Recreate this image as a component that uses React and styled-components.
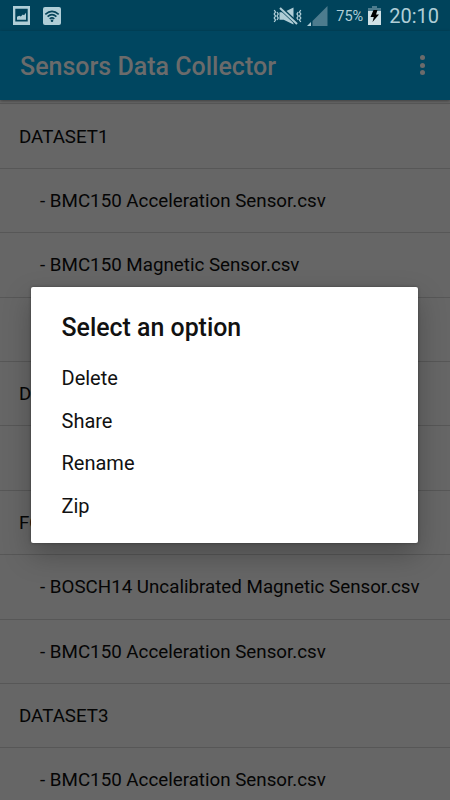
import styled, { createGlobalStyle } from "styled-components";

const rows = [
  { id: 1, text: "DATASET1" },
  { id: 2, text: "- BMC150 Acceleration Sensor.csv", child: true },
  { id: 3, text: "- BMC150 Magnetic Sensor.csv", child: true },
  { id: 4, text: "", child: true },
  { id: 5, text: "DA" },
  { id: 6, text: "", child: true },
  { id: 7, text: "FO" },
  { id: 8, text: "- BOSCH14 Uncalibrated Magnetic Sensor.csv", child: true },
  { id: 9, text: "- BMC150 Acceleration Sensor.csv", child: true },
  { id: 10, text: "DATASET3" },
  { id: 11, text: "- BMC150 Acceleration Sensor.csv", child: true },
];

const options = ["Delete", "Share", "Rename", "Zip"];

const PictureIcon = () => (
  <svg width="17" height="19" viewBox="0 0 17 19">
    <path fill="#b0ced7" fillRule="evenodd" d="M0 0h17v19H0zM2.3 2.8v12.8h12.4V2.8z" />
    <path fill="#b0ced7" d="M4 13.7v-3l2.3-1 1.5.8 2-2 1.2.7 2-2.5v7z" />
  </svg>
);

const WifiIcon = () => (
  <svg width="18" height="18" viewBox="0 0 18 18">
    <rect width="18" height="18" rx="2" fill="#b0ced7" />
    <g fill="none" stroke="#06445a" strokeWidth="1.6">
      <path d="M2.3 7.3Q9 1.3 15.7 7.3" />
      <path d="M4.6 9.7Q9 5.6 13.4 9.7" />
      <path d="M6.7 11.9Q9 9.8 11.3 11.9" />
    </g>
    <circle cx="9" cy="13.8" r="1.3" fill="#06445a" />
  </svg>
);

const MuteIcon = () => (
  <svg width="30" height="18" viewBox="0 0 30 18">
    <g fill="none" stroke="#b0ced7" strokeWidth="1.3">
      <path d="M2.2 3l1.3 2-1.3 2 1.3 2-1.3 2 1.3 2-1.3 2" />
      <path d="M5 5l1.2 2L5 9l1.2 2L5 13" />
      <path d="M28.8 3l-1.3 2 1.3 2-1.3 2 1.3 2-1.3 2 1.3 2" />
      <path d="M26.2 5L25 7l1.2 2-1.2 2 1.2 2" />
    </g>
    <path fill="#b0ced7" d="M7.5 5.2h4.2L21.5.4v17.2l-9.8-4.8H7.5z" />
    <path stroke="#06445a" strokeWidth="4" d="M7.5 0l18 17" />
    <path stroke="#b0ced7" strokeWidth="2" d="M8 1l17 16" />
  </svg>
);

const SignalIcon = () => (
  <svg width="21" height="20" viewBox="0 0 21 20">
    <path fill="#4d7c8e" d="M20.5 0v20H5.5v-5z" />
    <path fill="#b0ced7" d="M4 16v4H0z" />
  </svg>
);

const BatteryIcon = () => (
  <svg width="13" height="19" viewBox="0 0 13 19">
    <path fill="#4d7c8e" d="M4 0h5v2h4v4H0V2h4z" />
    <path fill="#d0e1e6" d="M0 5h13v14H0z" />
    <path fill="#000" d="M5.5 4h4L8 8.5h3L4.5 16l1.3-5H2.5z" />
  </svg>
);

const App = () => {
  return (
    <Screen>
      <GlobalStyle />
      <StatusBar>
        <StatusGroup $gap="13px">
          <PictureIcon />
          <WifiIcon />
        </StatusGroup>
        <StatusGroup $gap="5px">
          <MuteIcon />
          <SignalIcon />
          <Percent>75%</Percent>
          <BatteryIcon />
          <Clock>20:10</Clock>
        </StatusGroup>
      </StatusBar>
      <Toolbar>
        <Title>Sensors Data Collector</Title>
        <MenuButton aria-label="More options">
          <Dot />
          <Dot />
          <Dot />
        </MenuButton>
      </Toolbar>
      <List>
        {rows.map(row => (
          <Row key={row.id} $child={row.child}>
            {row.text}
          </Row>
        ))}
      </List>
      <Overlay>
        <Dialog role="dialog">
          <DialogTitle>Select an option</DialogTitle>
          {options.map(option => (
            <Option key={option}>{option}</Option>
          ))}
        </Dialog>
      </Overlay>
    </Screen>
  );
};

export default App;

/* ---------------------------- Styled Components --------------------------- */

const GlobalStyle = createGlobalStyle`
  * {
    box-sizing: border-box;
  }

  body {
    margin: 0;
    font-family: Roboto, sans-serif;
  }
`;

const Screen = styled.div`
  position: relative;
  display: flex;
  flex-direction: column;
  width: 450px;
  height: 800px;
  overflow: hidden;
  background: #666;
`;

const StatusBar = styled.div`
  flex: none;
  display: flex;
  justify-content: space-between;
  height: 31px;
  padding: 0 11px 0 13px;
  background: #00435b;
  color: #b0ced7;
`;

const StatusGroup = styled.div`
  display: flex;
  align-items: center;
  gap: ${props => props.$gap};
`;

const Percent = styled.span`
  margin-left: 3px;
  padding-top: 2px;
  font-size: 14.5px;
`;

const Clock = styled.span`
  margin-left: 3px;
  padding-top: 1px;
  font-size: 20px;
`;

const Toolbar = styled.header`
  flex: none;
  z-index: 1;
  display: flex;
  align-items: center;
  justify-content: space-between;
  height: 69px;
  padding: 0 25px 0 20px;
  background: #004660;
  box-shadow: 0 1px 3px rgba(0, 0, 0, 0.4);
`;

const Title = styled.h1`
  margin: 0;
  padding-top: 2px;
  font-size: 25px;
  font-weight: 500;
  color: #6b6b6b;
`;

const MenuButton = styled.button`
  display: flex;
  flex-direction: column;
  gap: 2.6px;
  padding: 0 0 1px;
  border: 0;
  background: none;
`;

const Dot = styled.span`
  width: 5px;
  height: 5px;
  border-radius: 50%;
  background: #6b6b6b;
`;

const List = styled.div`
  padding-top: 3.4px;
`;

const Row = styled.div`
  display: flex;
  align-items: center;
  height: 64.4px;
  padding-top: 1px;
  padding-left: ${props => (props.$child ? "40px" : "19px")};
  border-top: 1px solid #575757;
  font-size: 18.75px;
  white-space: nowrap;
  color: #050505;
`;

const Overlay = styled.div`
  position: absolute;
  inset: 30px 0 0;
  z-index: 2;
  display: flex;
  align-items: center;
  justify-content: center;
  padding-right: 1px;
`;

const Dialog = styled.div`
  width: 387px;
  height: 256px;
  padding: 24px 30px 0;
  border-radius: 2px;
  background: #fff;
  box-shadow: 0 12px 28px rgba(0, 0, 0, 0.26), 0 0 3px rgba(0, 0, 0, 0.35);
`;

const DialogTitle = styled.h2`
  margin: 0 0 12px;
  padding-left: 0.5px;
  font-size: 24.9px;
  line-height: 34px;
  font-weight: 500;
  color: #111;
`;

const Option = styled.div`
  height: 42.5px;
  padding-left: 0.5px;
  font-size: 20px;
  line-height: 42.5px;
  color: #111;
`;
